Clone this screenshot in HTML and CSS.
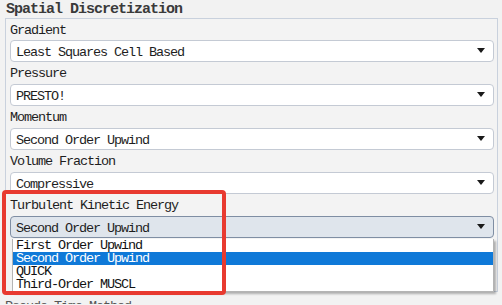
FILE: index.html
```html
<!DOCTYPE html>
<html>
<head>
<meta charset="utf-8">
<link rel="stylesheet" href="styles.css">
</head>
<body>
<div class="page">
  <div class="title">Spatial Discretization</div>
  <div class="panel">
    <div class="field">
      <div class="label first">Gradient</div>
      <div class="select"><span>Least Squares Cell Based</span><svg class="arrow" width="8" height="5" viewBox="0 0 8 5"><polygon points="0,0 8,0 4,5"/></svg></div>
    </div>
    <div class="field">
      <div class="label">Pressure</div>
      <div class="select"><span>PRESTO!</span><svg class="arrow" width="8" height="5" viewBox="0 0 8 5"><polygon points="0,0 8,0 4,5"/></svg></div>
    </div>
    <div class="field">
      <div class="label">Momentum</div>
      <div class="select"><span>Second Order Upwind</span><svg class="arrow" width="8" height="5" viewBox="0 0 8 5"><polygon points="0,0 8,0 4,5"/></svg></div>
    </div>
    <div class="field">
      <div class="label">Volume Fraction</div>
      <div class="select"><span>Compressive</span><svg class="arrow" width="8" height="5" viewBox="0 0 8 5"><polygon points="0,0 8,0 4,5"/></svg></div>
    </div>
    <div class="field">
      <div class="label">Turbulent Kinetic Energy</div>
      <div class="select open"><span>Second Order Upwind</span><svg class="arrow" width="8" height="5" viewBox="0 0 8 5"><polygon points="0,0 8,0 4,5"/></svg>
        <ul class="list">
          <li>First Order Upwind</li>
          <li class="selected">Second Order Upwind</li>
          <li>QUICK</li>
          <li>Third-Order MUSCL</li>
        </ul>
      </div>
    </div>
  </div>
  <div class="title next">Pseudo Time Method</div>
  <div class="highlight"></div>
</div>
</body>
</html>
```
FILE: styles.css
```css
html, body {
  margin: 0;
  padding: 0;
  background: #f2f2f2;
}
body {
  font-family: "Liberation Mono", "DejaVu Sans Mono", monospace;
  font-size: 13.5px;
  letter-spacing: -1.1px;
  color: #1e1e1e;
  width: 502px;
  height: 305px;
  overflow: hidden;
}
.page {
  position: relative;
  height: 305px;
  overflow: hidden;
}
.title {
  height: 18px;
  line-height: 20px;
  padding-left: 6px;
  font-size: 15px;
  font-weight: bold;
  letter-spacing: -1px;
  color: #3a3a3a;
}
.title.next {
  height: 12px;
  overflow: hidden;
  padding-left: 5px;
  line-height: 30px;
  color: #555;
  font-weight: normal;
  font-size: 13.5px;
  letter-spacing: -1.1px;
}
.panel {
  margin: 0 4px 0 5px;
  border: 1px solid #c9d1dd;
  background: #f3f3f3;
  padding: 0 3px 53px 4px;
}
.label {
  height: 22px;
  line-height: 24px;
  white-space: nowrap;
}
.label.first {
  height: 21px;
  line-height: 23px;
}
.select {
  position: relative;
  box-sizing: border-box;
  height: 22px;
  border: 1px solid #c4cad4;
  border-radius: 4px;
  background: #ffffff;
  display: flex;
  align-items: center;
  justify-content: space-between;
  padding: 2px 8px 0 5px;
  white-space: nowrap;
}
.select.open {
  background: #dfe5ec;
  border-color: #7f8ea3;
}
.arrow {
  fill: #1a1a1a;
  margin-top: -3px;
}
.list {
  position: absolute;
  top: 22px;
  left: 1px;
  right: -1px;
  margin: 0;
  padding: 0;
  list-style: none;
  background: #ffffff;
  border: 1px solid #b4b4b4;
  border-top: none;
  box-shadow: 2px 2px 2px rgba(0, 0, 0, 0.28);
}
.list li {
  height: 13px;
  line-height: 13px;
  padding-left: 3px;
  color: #111;
  overflow: hidden;
}
.list li.selected {
  background: #0f79d8;
  color: #ffffff;
}
.highlight {
  position: absolute;
  left: 2px;
  top: 190px;
  width: 224px;
  height: 105px;
  box-sizing: border-box;
  border: 4px solid #e83a30;
  border-radius: 4px;
}
```
